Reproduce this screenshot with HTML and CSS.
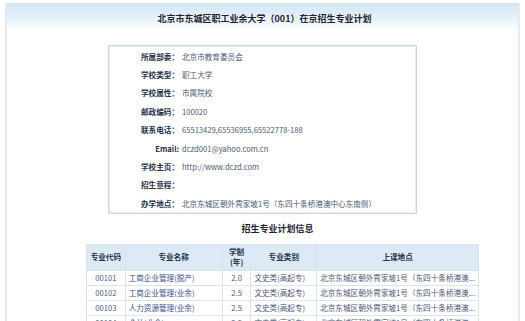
FILE: index.html
```html
<!DOCTYPE html>
<html lang="zh">
<head>
<meta charset="utf-8">
<link rel="stylesheet" href="styles.css">
</head>
<body>
<div class="page">
  <div class="band"><h1 class="title">北京市东城区职工业余大学（001）在京招生专业计划</h1></div>
  <div class="info">
    <div class="row"><span class="lbl">所属部委：</span><span class="val">北京市教育委员会</span></div>
    <div class="row"><span class="lbl">学校类型：</span><span class="val">职工大学</span></div>
    <div class="row"><span class="lbl">学校属性：</span><span class="val">市属院校</span></div>
    <div class="row"><span class="lbl">邮政编码：</span><span class="val">100020</span></div>
    <div class="row"><span class="lbl">联系电话：</span><span class="val">65513429,65536955,65522778-188</span></div>
    <div class="row"><span class="lbl">Email:</span><span class="val">dczd001@yahoo.com.cn</span></div>
    <div class="row"><span class="lbl">学校主页：</span><span class="val">http://www.dczd.com</span></div>
    <div class="row"><span class="lbl">招生章程：</span><span class="val"></span></div>
    <div class="row"><span class="lbl">办学地点：</span><span class="val">北京东城区朝外霄家坡1号（东四十条桥港澳中心东南侧）</span></div>
  </div>
  <h2 class="sub">招生专业计划信息</h2>
  <table class="plan">
    <thead>
      <tr><th class="c1">专业代码</th><th class="c2">专业名称</th><th class="c3">学制<br>(年)</th><th class="c4">专业类别</th><th class="c5">上课地点</th></tr>
    </thead>
    <tbody>
      <tr><td class="ctr">00101</td><td class="lnk">工商企业管理(脱产)</td><td class="ctr">2.0</td><td>文史类(高起专)</td><td>北京东城区朝外霄家坡1号（东四十条桥港澳...</td></tr>
      <tr><td class="ctr">00102</td><td class="lnk">工商企业管理(业余)</td><td class="ctr">2.5</td><td>文史类(高起专)</td><td>北京东城区朝外霄家坡1号（东四十条桥港澳...</td></tr>
      <tr><td class="ctr">00103</td><td class="lnk">人力资源管理(业余)</td><td class="ctr">2.5</td><td>文史类(高起专)</td><td>北京东城区朝外霄家坡1号（东四十条桥港澳...</td></tr>
      <tr><td class="ctr">00104</td><td class="lnk">会计(业余)</td><td class="ctr">2.5</td><td>文史类(高起专)</td><td>北京东城区朝外霄家坡1号（东四十条桥港澳...</td></tr>
    </tbody>
  </table>
</div>
</body>
</html>
```

FILE: styles.css
```css
html, body {
  margin: 0;
  padding: 0;
  background: #ffffff;
  font-family: "Liberation Serif", "Noto Sans CJK SC", serif;
  overflow: hidden;
}
.page {
  margin: 3px 5px 0 5px;
  height: 330px;
  border-left: 2px solid #e1eaec;
  border-right: 2px solid #e4ecee;
}
.band {
  height: 28px;
  background: linear-gradient(to bottom, #cfe6f4 0%, #e6f2f9 55%, #ffffff 100%);
  display: flex;
  align-items: center;
  justify-content: center;
}
.title {
  margin: 2px 0 0 4px;
  font-family: "Noto Sans CJK SC", sans-serif;
  font-size: 9px;
  font-weight: 700;
  color: #1e2430;
}
.info {
  width: 307px;
  margin: 14px 0 0 101px;
  border: 1px solid #c4d9dc;
  box-shadow: inset 0 0 0 1px #e6eff0;
  padding: 1px 0 0 0;
}
.row {
  height: 18.4px;
  display: flex;
  align-items: center;
  font-size: 7.6px;
}
.lbl {
  width: 70px;
  text-align: right;
  font-family: "Noto Sans CJK SC", sans-serif;
  font-weight: 700;
  color: #27324a;
}
.val {
  margin-left: 3px;
  font-family: "Noto Sans CJK SC", sans-serif;
  color: #4a5874;
}
.sub {
  margin: 7px 0 0 0;
  padding-left: 30px;
  text-align: center;
  font-family: "Noto Sans CJK SC", sans-serif;
  font-size: 9px;
  font-weight: 700;
  color: #1e2430;
  height: 15px;
  line-height: 15px;
}
.plan {
  margin: 8px 0 0 79px;
  width: 393px;
  border-collapse: collapse;
  font-family: "Noto Sans CJK SC", sans-serif;
  font-size: 7.6px;
  color: #4a5874;
}
.plan th {
  background: #dce9f6;
  border: 1px solid #d8e2e8;
  height: 25px;
  padding: 0;
  font-weight: 700;
  color: #27324a;
  line-height: 10px;
}
.plan td {
  border: 1px solid #dde4e8;
  height: 14px;
  padding: 0 3px;
  white-space: nowrap;
}
.plan .c1 { width: 38px; }
.plan .c2 { width: 97px; }
.plan .c3 { width: 28px; }
.plan .c4 { width: 65px; }
.plan .ctr { text-align: center; }
.plan .lnk { color: #3b4f8a; }
```
